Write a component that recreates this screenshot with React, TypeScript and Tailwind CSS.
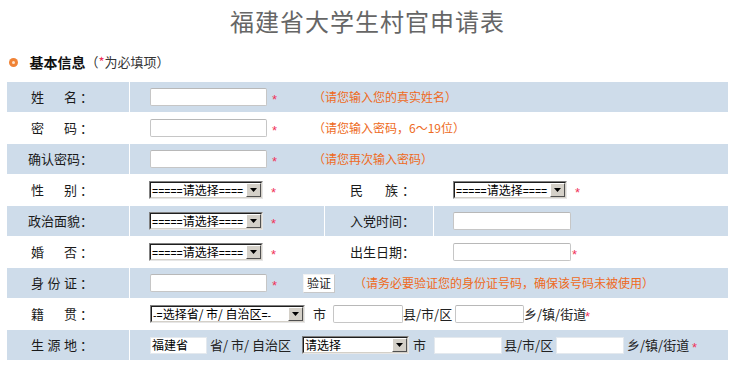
import React from "react";

const BLUE = "bg-[#cedcea]";

function Input({ w, children }: { w: string; children?: React.ReactNode }) {
  return (
    <div
      className={`${w} flex h-[18px] shrink-0 items-center rounded-[2px] border border-[#c6c6c6] border-t-[#b8b8b8] bg-white pl-[1px] text-[12px] leading-[14px] text-black`}
    >
      {children}
    </div>
  );
}

function FlatInput({ w, children }: { w: string; children?: React.ReactNode }) {
  return (
    <div
      className={`${w} flex h-[17px] shrink-0 items-center border border-[#e4e9ee] bg-white pl-[1px] text-[12px] leading-[14px] text-black`}
    >
      {children}
    </div>
  );
}

function Eq({ children }: { children: React.ReactNode }) {
  return <span className="font-['Liberation_Sans',sans-serif] text-[10.5px]">{children}</span>;
}

function Select({ w, children }: { w: string; children: React.ReactNode }) {
  return (
    <div
      className={`${w} flex h-[18px] shrink-0 border border-t-[#808080] border-l-[#808080] border-r-[#e6e6e6] border-b-[#e6e6e6] bg-white`}
    >
      <div className="flex flex-1 border border-t-[#1e1e1e] border-l-[#1e1e1e] border-r-[#d4d0c8] border-b-[#d4d0c8]">
        <span className="flex-1 whitespace-nowrap text-[12px] leading-[14px] text-black">{children}</span>
        <div className="flex h-full w-[15px] shrink-0 items-center justify-center border border-t-[#ffffff] border-l-[#ffffff] border-r-[#505050] border-b-[#505050] bg-[#d4d0c8]">
          <svg width="7" height="4" viewBox="0 0 7 4">
            <path d="M0 0H7L3.5 4Z" fill="#000" />
          </svg>
        </div>
      </div>
    </div>
  );
}

function Star({ className = "" }: { className?: string }) {
  return (
    <span
      className={`${className} shrink-0 pt-[5px] font-['Liberation_Sans',sans-serif] text-[13px] leading-[14px] text-[#f0325a]`}
    >
      *
    </span>
  );
}

function Hint({ children, className = "" }: { children: React.ReactNode; className?: string }) {
  return (
    <span className={`${className} whitespace-nowrap text-[12px] leading-[14px] text-[#ee6a22]`}>
      {children}
    </span>
  );
}

function Spaced({ chars, pad = "px-[3px]" }: { chars: string[]; pad?: string }) {
  return (
    <>
      <span className={`flex w-[52px] justify-between ${pad}`}>
        {chars.map((c, i) => (
          <span key={i}>{c}</span>
        ))}
      </span>
      <span>：</span>
    </>
  );
}

function Plain({ text }: { text: string }) {
  return (
    <>
      <span className="w-[52px] whitespace-nowrap">{text}</span>
      <span>：</span>
    </>
  );
}

function Label1({ bg, children }: { bg: string; children: React.ReactNode }) {
  return (
    <div
      className={`${bg} flex w-[122px] shrink-0 items-center pl-[21px] text-[13px] leading-[16px] text-[#1a1a1a]`}
    >
      {children}
    </div>
  );
}

function Label3({ bg, children }: { bg: string; children: React.ReactNode }) {
  return (
    <div
      className={`${bg} flex w-[108px] shrink-0 items-center pl-[25px] text-[13px] leading-[16px] text-[#1a1a1a]`}
    >
      {children}
    </div>
  );
}

function Txt({ children, className = "" }: { children: React.ReactNode; className?: string }) {
  return (
    <span className={`${className} shrink-0 whitespace-nowrap text-[13px] leading-[16px] text-[#222]`}>
      {children}
    </span>
  );
}

function Choose() {
  return (
    <span className="pl-[1px]">
      <Eq>=====</Eq>请选择<Eq>====</Eq>
    </span>
  );
}

export default function App() {
  return (
    <div className="h-[369px] w-[748px] overflow-hidden bg-white font-['Noto_Sans_CJK_SC',sans-serif]">
      <div className="ml-[7px] w-[721px]">
        <div className="pt-[9px] text-center text-[24px] leading-[24px] tracking-[1px] text-[#666]">
          福建省大学生村官申请表
        </div>

        <div className="mt-[19px] flex h-[20px] items-center">
          <span className="ml-[1.5px] flex h-[9px] w-[9px] items-center justify-center rounded-full bg-[#f08336]">
            <span className="h-[3px] w-[3px] rounded-full bg-[#fde3cc]" />
          </span>
          <span className="ml-[12px] text-[14px] font-bold leading-[20px] text-[#111]">基本信息</span>
          <span className="text-[13px] leading-[20px] text-[#333]">
            （<span className="text-[#f0325a]">*</span>为必填项）
          </span>
        </div>

        <div className="mt-[10px] flex flex-col gap-[1px]">
          {/* 姓名 */}
          <div className="flex h-[30px] gap-[1px]">
            <Label1 bg={BLUE}>
              <Spaced chars={["姓", "名"]} />
            </Label1>
            <div className={`${BLUE} flex flex-1 items-center pl-[20px]`}>
              <Input w="w-[117px]" />
              <Star className="w-[46px] pl-[5px]" />
              <Hint>（请您输入您的真实姓名）</Hint>
            </div>
          </div>

          {/* 密码 */}
          <div className="flex h-[30px] gap-[1px]">
            <Label1 bg="bg-white">
              <Spaced chars={["密", "码"]} />
            </Label1>
            <div className="flex flex-1 items-center bg-white pl-[20px]">
              <Input w="w-[117px]" />
              <Star className="w-[46px] pl-[5px]" />
              <Hint>（请您输入密码，6～19位）</Hint>
            </div>
          </div>

          {/* 确认密码 */}
          <div className="flex h-[30px] gap-[1px]">
            <Label1 bg={BLUE}>
              <Plain text="确认密码" />
            </Label1>
            <div className={`${BLUE} flex flex-1 items-center pl-[20px]`}>
              <Input w="w-[117px]" />
              <Star className="w-[46px] pl-[5px]" />
              <Hint>（请您再次输入密码）</Hint>
            </div>
          </div>

          {/* 性别 / 民族 */}
          <div className="flex h-[30px] gap-[1px]">
            <Label1 bg="bg-white">
              <Spaced chars={["性", "别"]} />
            </Label1>
            <div className="flex w-[194px] shrink-0 items-center bg-white pl-[19px]">
              <Select w="w-[114px]">
                <Choose />
              </Select>
              <Star className="ml-[8px]" />
            </div>
            <Label3 bg="bg-white">
              <Spaced chars={["民", "族"]} pad="pr-[4px]" />
            </Label3>
            <div className="flex flex-1 items-center bg-white pl-[19px]">
              <Select w="w-[114px]">
                <Choose />
              </Select>
              <Star className="ml-[8px]" />
            </div>
          </div>

          {/* 政治面貌 / 入党时间 */}
          <div className="flex h-[30px] gap-[1px]">
            <Label1 bg={BLUE}>
              <Plain text="政治面貌" />
            </Label1>
            <div className={`${BLUE} flex w-[194px] shrink-0 items-center pl-[19px]`}>
              <Select w="w-[114px]">
                <Choose />
              </Select>
              <Star className="ml-[8px]" />
            </div>
            <Label3 bg={BLUE}>
              <Plain text="入党时间" />
            </Label3>
            <div className={`${BLUE} flex flex-1 items-center pl-[19px]`}>
              <Input w="w-[118px]" />
            </div>
          </div>

          {/* 婚否 / 出生日期 */}
          <div className="flex h-[30px] gap-[1px]">
            <Label1 bg="bg-white">
              <Spaced chars={["婚", "否"]} />
            </Label1>
            <div className="flex w-[194px] shrink-0 items-center bg-white pl-[19px]">
              <Select w="w-[114px]">
                <Choose />
              </Select>
              <Star className="ml-[8px]" />
            </div>
            <Label3 bg="bg-white">
              <Plain text="出生日期" />
            </Label3>
            <div className="flex flex-1 items-center bg-white pl-[19px]">
              <Input w="w-[118px]" />
              <Star className="ml-[1px]" />
            </div>
          </div>

          {/* 身份证 */}
          <div className="flex h-[30px] gap-[1px]">
            <Label1 bg={BLUE}>
              <Spaced chars={["身", "份", "证"]} />
            </Label1>
            <div className={`${BLUE} flex flex-1 items-center pl-[20px]`}>
              <Input w="w-[117px]" />
              <Star className="w-[36px] pl-[5px]" />
              <button className="flex h-[19px] w-[32px] shrink-0 items-center justify-center border border-[#f2f2f2] border-b-[#c8c8c8] border-r-[#c8c8c8] bg-white text-[12px] leading-[14px] text-[#222]">
                验证
              </button>
              <Hint className="ml-[19px]">（请务必要验证您的身份证号码，确保该号码未被使用）</Hint>
            </div>
          </div>

          {/* 籍贯 */}
          <div className="flex h-[30px] gap-[1px]">
            <Label1 bg="bg-white">
              <Spaced chars={["籍", "贯"]} />
            </Label1>
            <div className="flex flex-1 items-center bg-white pl-[20px]">
              <Select w="w-[155px]">
                <span className="pl-[1px]">
                  <Eq>-=</Eq>选择省/ 市/ 自治区<Eq>=-</Eq>
                </span>
              </Select>
              <Txt className="ml-[8px]">市</Txt>
              <span className="w-[7px] shrink-0" />
              <Input w="w-[70px]" />
              <Txt className="w-[52px]">县/市/区</Txt>
              <Input w="w-[69px]" />
              <Txt className="w-[61px]">乡/镇/街道</Txt>
              <Star />
            </div>
          </div>

          {/* 生源地 */}
          <div className="flex h-[30px] gap-[1px]">
            <Label1 bg={BLUE}>
              <Spaced chars={["生", "源", "地"]} />
            </Label1>
            <div className={`${BLUE} flex flex-1 items-center pl-[20px]`}>
              <FlatInput w="w-[57px]">福建省</FlatInput>
              <Txt className="ml-[3px] w-[92px]">省/ 市/ 自治区</Txt>
              <Select w="w-[107px]">
                <span className="pl-[1px]">请选择</span>
              </Select>
              <Txt className="ml-[4px]">市</Txt>
              <span className="w-[8px] shrink-0" />
              <FlatInput w="w-[68px]" />
              <Txt className="w-[54px] pl-[2px]">县/市/区</Txt>
              <FlatInput w="w-[68px]" />
              <Txt className="w-[66px] pl-[3px]">乡/镇/街道</Txt>
              <Star className="ml-[2px]" />
            </div>
          </div>
        </div>
      </div>
    </div>
  );
}
